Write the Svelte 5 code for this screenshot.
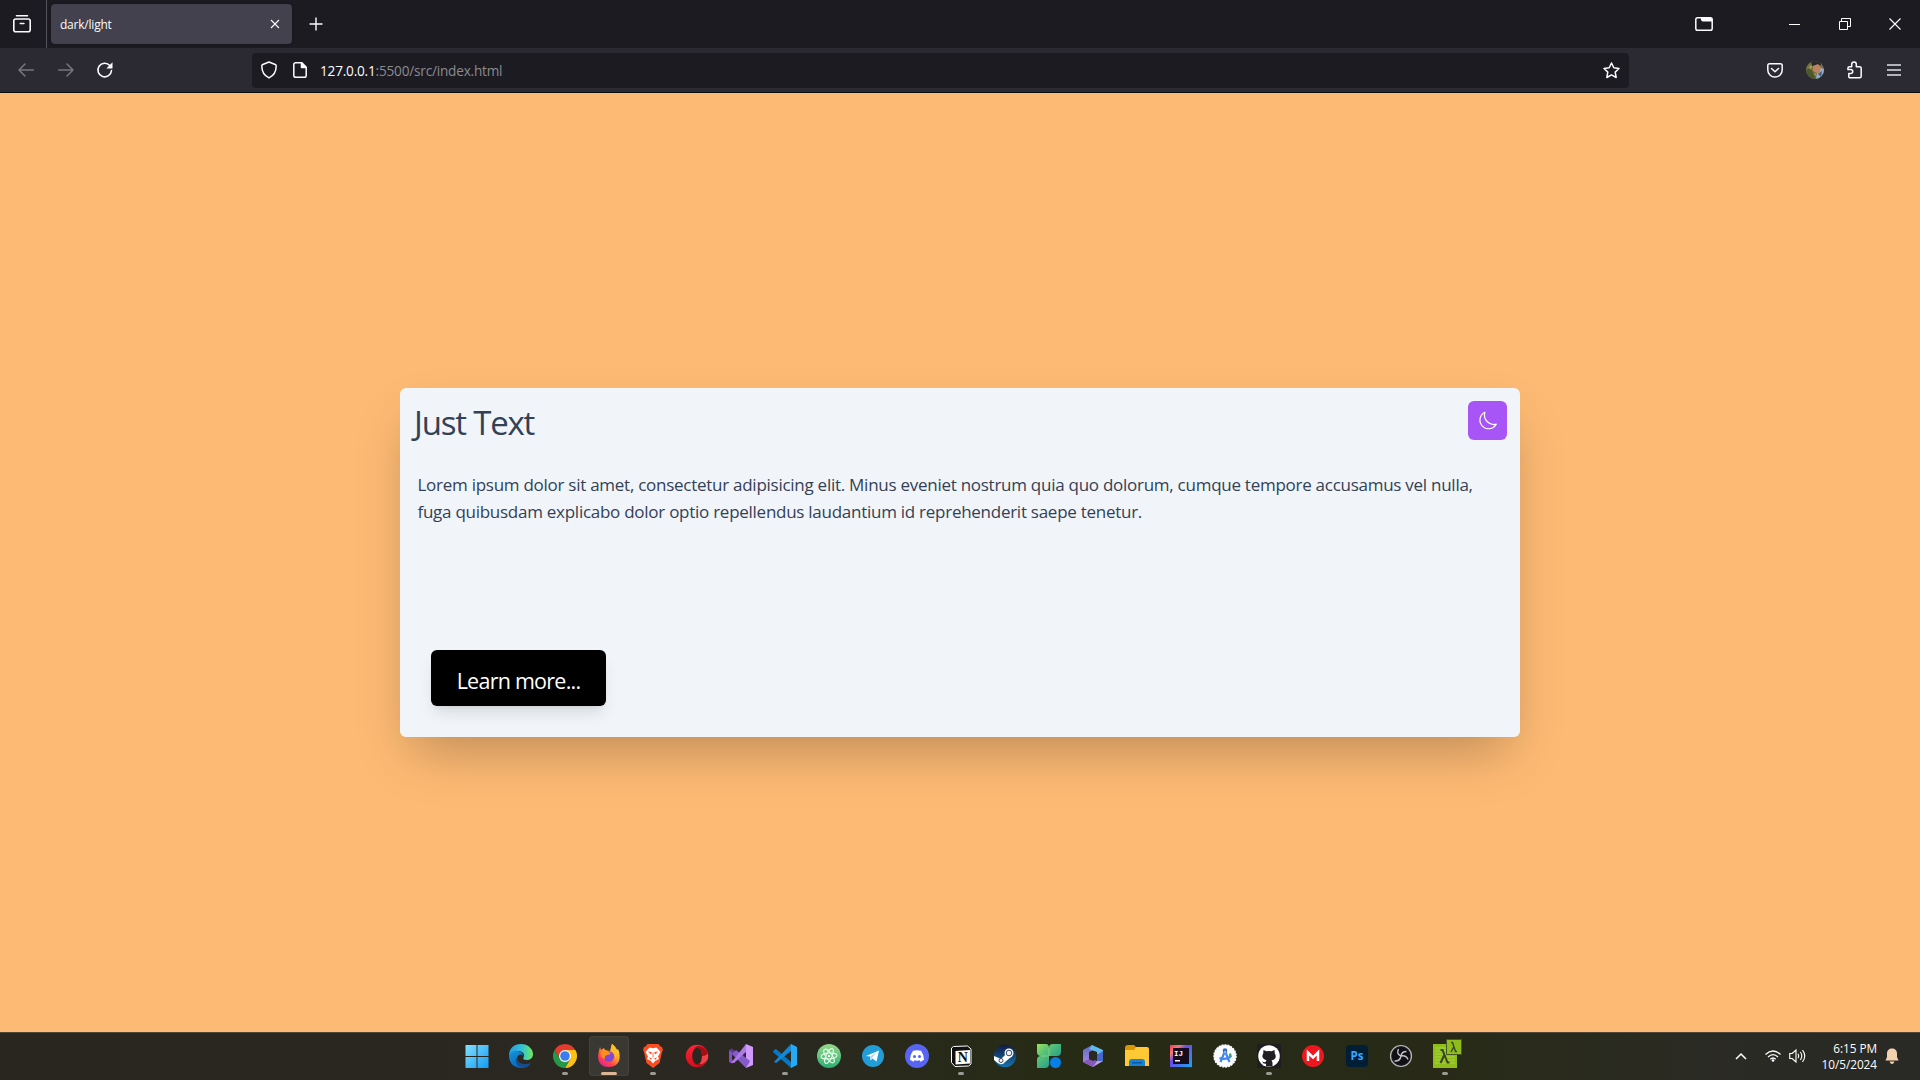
<script>
  const apps = [
    { name: 'windows' }, { name: 'edge' }, { name: 'chrome', open: true },
    { name: 'firefox', open: true, active: true }, { name: 'brave', open: true },
    { name: 'opera' }, { name: 'vstudio' }, { name: 'vscode', open: true },
    { name: 'atom' }, { name: 'telegram' }, { name: 'discord' },
    { name: 'notion', open: true }, { name: 'steam' }, { name: 'clover' },
    { name: 'office' }, { name: 'files' }, { name: 'idea' }, { name: 'android' },
    { name: 'github', open: true }, { name: 'mega' }, { name: 'ps' },
    { name: 'obs' }, { name: 'lambda', open: true }
  ];
</script>

<div class="screen">
  <div class="tabbar">
    <div class="recent">
      <svg width="20" height="20" viewBox="0 0 20 20" fill="none" stroke="#fbfbfe" stroke-width="1.6" stroke-linecap="round"><path d="M4.500 1.800h11" /><rect x="1.800" y="5" width="16.400" height="12.800" rx="2" /><path d="M8.300 9.500h3.600" /></svg>
    </div>
    <div class="tab">
      <span class="tab-title">dark/light</span>
      <svg width="10" height="10" viewBox="0 0 10 10" stroke="#fbfbfe" stroke-width="1.1"><path d="M1 1l8 8M9 1L1 9" /></svg>
    </div>
    <svg class="plus" width="14" height="14" viewBox="0 0 14 14" stroke="#fbfbfe" stroke-width="1.4"><path d="M7 .5v13M.5 7h13" /></svg>
    <div class="window-buttons">
      <svg width="18" height="14" viewBox="0 0 18 14" fill="none" stroke="#fbfbfe" stroke-width="1.5"><rect x=".8" y=".8" width="16.4" height="12.4" rx="1.8" /><path d="M6 1h11v3.4H8q-2 0-2-2z" fill="#fbfbfe" stroke="none" /></svg>
      <svg class="min" width="11" height="11" viewBox="0 0 11 11" stroke="#fff"><path d="M0 5.5h11" /></svg>
      <svg class="restore" width="12" height="12" viewBox="0 0 12 12" fill="none" stroke="#fff"><path d="M.5 3.5h8v8h-8zM2.5 3.5v-3h9v8h-3" /></svg>
      <svg class="close" width="12" height="12" viewBox="0 0 12 12" stroke="#fff" stroke-width="1.1"><path d="M.5.5l11 11M11.5.5l-11 11" /></svg>
    </div>
  </div>

  <div class="toolbar">
    <div class="nav">
      <svg width="16" height="14" viewBox="0 0 16 14" fill="none" stroke="#77767e" stroke-width="1.5" stroke-linecap="round" stroke-linejoin="round"><path d="M15.3 7H1M7 1L1 7l6 6" /></svg>
      <svg width="16" height="14" viewBox="0 0 16 14" fill="none" stroke="#77767e" stroke-width="1.5" stroke-linecap="round" stroke-linejoin="round"><path d="M.7 7H15M9 1l6 6-6 6" /></svg>
      <svg width="16" height="16" viewBox="0 0 16 16" fill="none" stroke="#fbfbfe" stroke-width="1.6" stroke-linecap="round"><path d="M14.5 8.5A6.8 6.8 0 1 1 12.8 3.5" /><path d="M15.5.2V6.5H9.3z" fill="#fbfbfe" stroke="none" /></svg>
    </div>
    <div class="url">
      <svg width="16" height="18" viewBox="0 0 16 18" fill="none" stroke="#fbfbfe" stroke-width="1.5" stroke-linejoin="round"><path d="M8 1l6.2 2.5q1 .4 1 1.5c0 5-2 9.4-7.2 11.900C2.800 14.400.8 10 .8 5q0-1.100 1-1.500z" /></svg>
      <svg class="page" width="14" height="16" viewBox="0 0 14 16" fill="none" stroke="#fbfbfe" stroke-width="1.5" stroke-linejoin="round"><path d="M2.800.8h6L13.200 5.200v8.200q0 1.800-1.800 1.800H2.800q-2 0-2-1.800V2.600Q.8.800 2.800.8z" /><path d="M8.500.8v4.700h4.700z" fill="#fbfbfe" /></svg>
      <span class="address"><b>127.0.0.1</b>:5500/src/index.html</span>
      <svg class="star" width="17" height="17" viewBox="0 0 17 17" fill="none" stroke="#fbfbfe" stroke-width="1.5" stroke-linejoin="round"><path d="M8.500 1l2.300 4.800 5.200.7-3.800 3.600 1 5.400-4.700-2.600-4.700 2.600 1-5.400L1 6.500l5.200-.7z" /></svg>
    </div>
    <div class="actions">
      <svg width="16" height="15" viewBox="0 0 16 15" fill="none" stroke="#fbfbfe" stroke-width="1.500" stroke-linecap="round" stroke-linejoin="round"><path d="M2.600.8h10.800q1.800 0 1.800 1.800v4.300a7.200 7.200 0 0 1-14.400 0V2.600Q.8.800 2.600.8zM4.500 5.500L8 8.800l3.500-3.300" /></svg>
      <svg class="avatar" width="18" height="18" viewBox="0 0 18 18"><defs><clipPath id="av"><circle cx="9" cy="9" r="9" /></clipPath></defs><g clip-path="url(#av)"><path fill="#747345" d="M0 0h18v18H0z" /><path fill="#8eaec9" d="M12 6l6 2v10h-8z" /><path fill="#282a24" d="M5 0h9l1 4-9 1z" /><path fill="#c28165" d="M7 5l5-2 3 4-2 6-6-3z" /><path fill="#4b572e" d="M0 9l5-2 2 5 3 2-1 4H0z" /><path fill="#b5a157" d="M3 6l3-2-1 5zM8 12l2 1-1 3z" /><path fill="#475d80" d="M12 13l4-3-1 6z" /></g></svg>
      <svg width="15" height="18" viewBox="0 0 15 18" fill="none" stroke="#fbfbfe" stroke-width="1.500" stroke-linejoin="round"><path d="M4.700 5.700V3.300a2.300 2.300 0 0 1 4.600 0v2.400h3.400q1.500 0 1.500 1.500v8.100q0 1.500-1.500 1.500H3.200q-1.400 0-1.400-1.400v-2.900h1.900a2 2 0 0 0 0-4H.9V7.200q0-1.500 1.500-1.500z" /></svg>
      <svg class="menu" width="14" height="12" viewBox="0 0 14 12" stroke="#e0e0e6" stroke-width="1.400"><path d="M0 1h14M0 6h14M0 11h14" /></svg>
    </div>
  </div>

  <main>
    <section class="card">
      <header>
        <h1>Just Text</h1>
        <button class="theme" aria-label="Toggle theme"><svg width="20" height="20" viewBox="0 0 20 20" fill="none" stroke="#fff" stroke-width="1.200" stroke-linejoin="round"><path d="M6.900 1.200A8.700 8.700 0 1 0 18.300 13.200 9.500 9.500 0 0 1 6.900 1.200z" /></svg></button>
      </header>
      <p><span class="line">Lorem ipsum dolor sit amet, consectetur adipisicing elit. Minus eveniet nostrum quia quo dolorum, cumque tempore accusamus vel nulla,</span> <span class="line">fuga quibusdam explicabo dolor optio repellendus laudantium id reprehenderit saepe tenetur.</span></p>
      <button class="more">Learn more...</button>
    </section>
  </main>

  <footer>
    <div class="apps">
      {#each apps as app}
        <div class="app" class:active={app.active}>
          <svg width="24" height="24" viewBox="0 0 24 24">
            {#if app.name === 'windows'}
              <defs><linearGradient id="win" x2="1" y2="1"><stop stop-color="#82e0fc" /><stop offset="1" stop-color="#139af5" /></linearGradient></defs>
              <path fill="url(#win)" d="M.5 1h11v11h-11zM12.500 1h11v11h-11zM.5 13h11v11h-11zM12.500 13h11v11h-11z" />
            {:else if app.name === 'edge'}
              <defs><linearGradient id="e1" x2="1"><stop stop-color="#249be5" /><stop offset=".55" stop-color="#35c1d3" /><stop offset="1" stop-color="#70ec59" /></linearGradient><linearGradient id="e2" x2=".5" y2="1"><stop stop-color="#1794d7" /><stop offset="1" stop-color="#0864bd" /></linearGradient></defs>
              <path fill="url(#e1)" d="M0 12C0 4 5 0 12 0c7 0 12 5 12 10 0 4-3 6-6.500 6-3 0-4-1-3-2.500C17 9 11 6 6 7.500Q2 8.700 0 12z" />
              <path fill="url(#e2)" d="M0 12c1-4 5-6 9-5 3 .6 5 2.500 5 5-2-3-6-1-6 3 0 5 6 8 13 5-2 3-5 4-9 4C5 24 0 19 0 12z" />
              <path fill="#134d8d" d="M9 12.500c-2 6 5 9.500 13 6.500-3 5-9 6-13 2.500-3-3-3-7 0-9z" />
            {:else if app.name === 'chrome'}
              <path fill="#e33b2e" d="M1.600 6A12 12 0 0 1 22.400 6H12L7 15z" />
              <path fill="#fbc116" d="M22.400 6A12 12 0 0 1 12 24l5.200-9L12 6z" />
              <path fill="#279847" d="M1.600 6A12 12 0 0 0 12 24l5.200-9L12 17 7 15z" />
              <circle cx="12" cy="12" r="6" fill="#fff" /><circle cx="12" cy="12" r="4.800" fill="#3b7ded" />
            {:else if app.name === 'firefox'}
              <defs><linearGradient id="ff" x1=".9" x2=".2" y2="1"><stop stop-color="#fff044" /><stop offset=".45" stop-color="#ff9a24" /><stop offset=".7" stop-color="#ff4a45" /><stop offset="1" stop-color="#e6189b" /></linearGradient></defs>
              <path fill="url(#ff)" d="M3 3l1 3 3-2 1 2 5 1 2-7c3 2 4 4 5 6l1-1c4 9 1 18-9 18C3 23 0 17 1.500 9z" />
              <circle cx="12" cy="12.500" r="5.200" fill="#8248d3" /><path fill="#ff8e1d" d="M4 8q4-2 7 0l3 1q-1 2-4 2-3 1-2 4c-4-1-5-4-4-7z" /><path fill="#ffbb28" d="M15 0c-3 6 4 8 3 14 4-5 2-10-3-14z" />
            {:else if app.name === 'brave'}
              <path fill="#fb4d22" d="M6.500 0h11l2 2.500 1.500.5 1 3-1 2-2.500 11L12 24l-6.500-5L3 8 2 6l1-3 1.500-.5z" />
              <path fill="#fff" d="M8.500 3.500l3.500.8 3.500-.8 4 4.500-2.500 4.500 1 2.500-4 2-2 2.500-2-2.500-4-2 1-2.500L4.500 8z" /><path fill="#fb4d22" d="M6.800 7.500l4 .8-.8 2.200zM17.200 7.500l-4 .8.8 2.200zM8 13.500l3 1-1.500 1.200zM16 13.500l-3 1 1.500 1.200zM11.600 8.500h.8v5h-.8z" />
            {:else if app.name === 'opera'}
              <defs><linearGradient id="op" x2="0" y2="1"><stop stop-color="#ff2337" /><stop offset="1" stop-color="#d1101d" /></linearGradient></defs>
              <path fill="url(#op)" fill-rule="evenodd" d="M12 .8a11.200 11.200 0 1 0 0 22.400 11.200 11.200 0 0 0 0-22.400zM12.500 3.500c3 0 4.500 4 4.500 8.500s-1.500 8.500-4.500 8.500S7.300 16.500 7.300 12s2.200-8.500 5.200-8.500z" /><path fill="#a70d14" d="M8.500 5.500Q12 .8 16 2.600c5 2 7.200 5.500 7.200 9.400s-2.200 7.400-7.200 9.400q-4 1.800-7.500-2.900c4 3.500 8.500 1 8.500-6.500s-4.500-10-8.500-6.500z" /><path fill="#f0424b" d="M17 12q0 6-3 8.300 5 .7 8.800-5.300.8-3 0-6-1 3-5.800 3z" />
            {:else if app.name === 'vstudio'}
              <path fill="#5c3c98" d="M0 6l3-1.500L19 18l-1 5L0 8z" /><path fill="#8751bd" d="M0 7v11l3 1.500 2-2-2-2V8z" /><path fill="#d09aff" d="M17 0l7 3v18l-7 3z" /><path fill="#855bc9" d="M7 6l14 11-4 7L3 10z" />
              <path fill="#ae78e7" d="M2 19L17 0v8L5 19z" />
            {:else if app.name === 'vscode'}
              <path fill="#0878c6" d="M1 6l2-1 15 13v6L0 8z" /><path fill="#1289d8" d="M1 18L18 0v7L3 19z" /><path fill="#28a9f4" d="M18 0l6 3v18l-6 3z" />
            {:else if app.name === 'atom'}
              <defs><linearGradient id="at" x2="0" y2="1"><stop stop-color="#97d98a" /><stop offset="1" stop-color="#2baf74" /></linearGradient></defs>
              <circle cx="12" cy="12" r="12" fill="url(#at)" /><g fill="none" stroke="#e9ffe9" stroke-width="1"><ellipse cx="12" cy="12" rx="3" ry="8" transform="rotate(25 12 12)" /><ellipse cx="12" cy="12" rx="3" ry="8" transform="rotate(85 12 12)" /><ellipse cx="12" cy="12" rx="3" ry="8" transform="rotate(145 12 12)" /></g><circle cx="12" cy="12" r="1.200" fill="#fff" />
            {:else if app.name === 'telegram'}
              <circle cx="12" cy="12" r="11" fill="#229dd8" /><path fill="#fff" d="M5 12L18 6.500l-2.500 11-4-3-2 2-.5-4z" /><path fill="#b6d9eb" d="M9 12.500l7-4.500-5 6-1.500 2z" />
            {:else if app.name === 'discord'}
              <circle cx="12" cy="12" r="12" fill="#5865f2" /><path fill="#fff" d="M8 6.800q4-1 8 0 3 4 3 9l-3.500 2-1-1.500q-2.500.8-5 0l-1 1.500-3.500-2q0-5 3-9z" /><circle cx="9.500" cy="12.500" r="1.500" fill="#5865f2" /><circle cx="14.500" cy="12.500" r="1.500" fill="#5865f2" />
            {:else if app.name === 'notion'}
              <path fill="#111" stroke="#fff" stroke-width="1" d="M2.500 4l2-1.500L18.500 2l3.500 3v15L19.500 22 6 22.500l-3.500-4z" /><path fill="#fff" d="M6.500 7L21 6v13.500L6.500 20.500z" /><text x="13.700" y="18" text-anchor="middle" font-family="Liberation Serif, serif" font-weight="700" font-size="14" fill="#111">N</text>
            {:else if app.name === 'steam'}
              <defs><linearGradient id="st" x2="0" y2="1"><stop stop-color="#111b42" /><stop offset="1" stop-color="#1474ad" /></linearGradient></defs>
              <circle cx="12" cy="12" r="11.200" fill="url(#st)" /><path fill="#fff" d="M1 12l7 3 5-5 5 3-6 5q-2 3-5 2-3-1-6-4z" /><circle cx="16" cy="9" r="4.500" fill="#fff" /><circle cx="16" cy="9" r="2.800" fill="#f2f2f2" stroke="#34476e" /><circle cx="8" cy="16.500" r="2" fill="none" stroke="#34476e" />
            {:else if app.name === 'clover'}
              <defs><linearGradient id="cl" gradientUnits="userSpaceOnUse" x2="20" y2="20"><stop stop-color="#9de35e" /><stop offset=".35" stop-color="#5cc577" /><stop offset="1" stop-color="#20988c" /></linearGradient></defs>
              <path fill="url(#cl)" d="M0 0h9q3 0 3 4 0-4 4-4h8v8q0 4-4 4h-8v8q0 4-4 4H0v-8q0-4 4-4Q0 12 0 8z" /><path d="M12 4v8H4" fill="none" stroke="#a7df84" stroke-width=".6" /><circle cx="18.500" cy="18.500" r="5.500" fill="#087fe4" />
            {:else if app.name === 'office'}
              <defs><linearGradient id="of" x2="0" y2="1"><stop stop-color="#596abd" /><stop offset="1" stop-color="#a582e5" /></linearGradient></defs>
              <path fill="url(#of)" d="M11 1L2 6v12l6-2V8l7-3z" /><path fill="#60b9ee" d="M11 1l11 5v7l-6-3V8L8 5z" /><path fill="#4768ca" d="M22 7v10l-6 2v-8z" /><path fill="#baa1ef" d="M16 17l6 0-10 6-10-5 8-2z" /><path fill="#8758b8" d="M2 18l6-3 8 2-4 6z" /><path fill="#292821" d="M12 8l4 2v5l-4 2-4-2v-5z" />
            {:else if app.name === 'files'}
              <path fill="#d89506" d="M0 4q0-3 3-3h6l3 3v5H0z" /><path fill="#ffc834" d="M0 6h9l2-3h11q2 0 2 2v17H0z" /><path fill="#1683d4" d="M4 22v-4q0-3 3-3h10q3 0 3 3v4z" /><path fill="#0755a0" d="M7 18h10v1.500H7z" />
            {:else if app.name === 'idea'}
              <defs><linearGradient id="id" x2="1" y2="1"><stop stop-color="#f43164" /><stop offset=".22" stop-color="#f67b71" /><stop offset=".4" stop-color="#694bea" /><stop offset="1" stop-color="#15a9ee" /></linearGradient></defs>
              <path fill="url(#id)" d="M1 1h22v22H1z" /><path fill="#160b1c" d="M4 4h16v16H4z" /><text x="5" y="11.500" font-family="Liberation Mono, monospace" font-size="7.500" font-weight="700" fill="#fff">IJ</text><path fill="#fff" d="M6 16h5v1.500H6z" />
            {:else if app.name === 'android'}
              <circle cx="12" cy="12" r="11" fill="#f9fbfd" stroke="#fff" stroke-width="1.500" stroke-dasharray="2 1" /><path fill="#38a66a" d="M16 10l2-1 1 4-3 1z" /><path fill="none" stroke="#4386ef" stroke-width="2.200" d="M12 7L7.500 18M12 7l4.500 11M6.500 14q5.500 2 11-1" /><circle cx="12" cy="6.500" r="2.300" fill="#3870c6" /><circle cx="12" cy="8" r=".8" fill="#fff" />
            {:else if app.name === 'github'}
              <path fill="#201c21" d="M0 0h24v24H0z" /><circle cx="12" cy="12" r="10.800" fill="#fff" /><path fill="#211e23" d="M6.500 6l3 1.300q2.500-.6 5 0l3-1.300.3 3.500q3 5-3.300 7l1 2v4H9v-2.800q-3 .5-4-2.500 3 2 4 0l.5-1q-6-2-3.300-6.700z" />
            {:else if app.name === 'mega'}
              <circle cx="12" cy="12" r="11" fill="#ed171f" /><path fill="none" stroke="#fff" stroke-width="2.500" d="M7 17V8.500l5 5 5-5V17" />
            {:else if app.name === 'ps'}
              <rect x="1" y="1" width="22" height="22" rx="4" fill="#001e36" /><text x="12" y="15.800" text-anchor="middle" font-family="Open Sans, sans-serif" font-weight="700" font-size="11.500" fill="#35a8ff">Ps</text>
            {:else if app.name === 'obs'}
              <circle cx="12" cy="12" r="10.500" fill="#242326" stroke="#bbb9bd" stroke-width="1.200" /><circle cx="12" cy="12" r="9" fill="#111014" /><path fill="none" stroke="#c5c2c8" stroke-width="1.400" d="M9.500 5q-2.500 5 2.500 7 5-1 7 3.500M12 12q-1 5.500-6.500 5M12 12q.5-4.500 5.500-4.500" />
            {:else if app.name === 'lambda'}
              <path fill="#8fbe1b" d="M0 0h24v24H0z" /><path stroke="#b0dc44" stroke-width=".8" d="M2 4h20M2 7h20M2 10h20M2 13h20M2 16h20M2 19h20" /><path fill="none" stroke="#39432b" stroke-width="2" d="M7.500 6h2l5 12.500h2M11.500 10.500L7.500 19" />
            {/if}
          </svg>
          {#if app.name === 'lambda'}
            <svg class="badge" width="16" height="16" viewBox="0 0 16 16"><path fill="#8fbe1b" stroke="#46562c" d="M.5.5h15v15H.5z" /><path fill="none" stroke="#39432b" stroke-width="1.400" d="M5 3.500h1.500l3 9H11M8 7.500L5 13" /></svg>
          {/if}
          {#if app.open}<i class="mark"></i>{/if}
        </div>
      {/each}
    </div>
    <div class="tray">
      <svg width="12" height="8" viewBox="0 0 12 8" fill="none" stroke="#fff" stroke-width="1.500"><path d="M1 7l5-5 5 5" /></svg>
      <svg class="wifi" width="16" height="12" viewBox="0 0 16 12" fill="none" stroke="#fff" stroke-width="1.200"><path d="M.5 4.500q7.500-7 15 0M3 7q5-4.800 10 0M5.300 9.300q2.700-2.600 5.400 0" /><circle cx="8" cy="10.500" r="1.300" fill="#fff" stroke="none" /></svg>
      <svg class="sound" width="17" height="14" viewBox="0 0 17 14" fill="none" stroke="#fff" stroke-width="1.100"><path d="M.7 4.500h2.500L7 1v12L3.200 9.500H.7zM9 4.800q1.500 2.200 0 4.400M11.300 3q3 4 0 8M13.500 1.200q4.500 5.800 0 11.600" /></svg>
      <div class="clock"><span>6:15 PM</span><span>10/5/2024</span></div>
      <svg class="bell" width="14" height="16" viewBox="0 0 14 16" fill="#f3d1ae"><path d="M7 .5c3 0 5 2 5 5V9l1.500 3.500H.5L2 9V5.500c0-3 2-5 5-5zM4.500 13.500h5Q8.500 16 7 16t-2.500-2.500z" /></svg>
    </div>
  </footer>
</div>

<style>
  :global(body) { margin: 0; overflow: hidden; }
  .screen { width: 1920px; height: 1080px; display: flex; flex-direction: column; font-family: "Open Sans", "Noto Sans", sans-serif; background: #fdba74; }
  svg { display: block; flex: none; overflow: visible; }
  button { border: 0; padding: 0; font-family: inherit; }
  .tabbar { height: 48px; background: #1c1b22; display: flex; align-items: center; }
  .recent { width: 47px; height: 48px; box-sizing: border-box; padding-left: 12px; border-right: 1px solid #55545c; display: flex; align-items: center; }
  .tab { width: 241px; height: 40px; box-sizing: border-box; margin-left: 4px; padding: 0 12px 0 9px; background: #42414d; border-radius: 4px; box-shadow: 0 0 3px #0006; display: flex; align-items: center; justify-content: space-between; }
  .tab-title { font-size: 12px; color: #fbfbfe; letter-spacing: -0.22px; }
  .plus { margin-left: 17px; }
  .window-buttons { margin-left: auto; padding-right: 19px; display: flex; align-items: center; }
  .min { margin-left: 76px; }
  .restore { margin-left: 39px; }
  .close { margin-left: 38px; }
  .toolbar { height: 45px; box-sizing: border-box; background: #2b2a33; border-bottom: 1px solid #0c0c0d; display: flex; align-items: center; }
  .nav { width: 252px; box-sizing: border-box; padding-left: 18px; display: flex; align-items: center; gap: 23.5px; }
  .url { width: 1377px; height: 35px; box-sizing: border-box; padding: 0 9px; border-radius: 4px; background: #1c1b22; display: flex; align-items: center; }
  .page { margin-left: 16px; }
  .address { margin-left: 13px; font-size: 13.6px; color: #8b8a90; letter-spacing: -0.2px; padding-top: 1px; }
  .address b { font-weight: 400; color: #fbfbfe; }
  .star { margin-left: auto; }
  .actions { margin-left: auto; padding-right: 19px; display: flex; align-items: center; gap: 24px; }
  .avatar { margin: 0 -1px; }
  .menu { margin-left: 1px; }
  main { height: 939px; display: flex; align-items: center; justify-content: center; }
  .card { width: 1120px; height: 349px; box-sizing: border-box; border-radius: 6px; background: #f1f5f9; color: #334155; box-shadow: 0 25px 50px -12px #00000040; padding: 13px; }
  header { display: flex; justify-content: space-between; height: 39px; }
  h1 { margin: 0; padding-left: 1px; font-weight: 400; font-size: 33px; line-height: 44px; letter-spacing: -1.2px; }
  .theme { width: 39px; height: 39px; border-radius: 6px; background: #a855f7; display: flex; align-items: center; justify-content: center; }
  p { margin: 31px 0 0 4.5px; font-size: 17px; line-height: 27px; }
  .line { display: block; white-space: nowrap; letter-spacing: -0.265px; }
  .more { display: block; width: 175px; height: 56px; margin: 125px 0 0 18px; padding-top: 4px; border-radius: 6px; background: #000; color: #fff; font-size: 21.5px; letter-spacing: -0.75px; box-shadow: 0 10px 15px -3px #0000001a, 0 4px 6px -4px #0000001a; }
  footer { height: 48px; box-sizing: border-box; padding-bottom: 1px; border-top: 1px solid #4d4639; background: linear-gradient(90deg, #28261f 0%, #2a2820 40%, #262b15 55%, #282a17 75%, #2b2b25 90%, #292925); display: flex; align-items: center; }
  .apps { display: flex; margin-left: 455px; }
  .app { width: 40px; height: 40px; margin: 0 2px; border-radius: 4px; display: flex; align-items: center; justify-content: center; position: relative; }
  .active { background: #3a3832; box-shadow: inset 0 0 0 1px #44423b; }
  .mark { position: absolute; bottom: 1px; left: 17px; width: 6px; height: 3px; border-radius: 2px; background: #9b9a94; }
  .active .mark { left: 12px; width: 16px; background: #ddb595; }
  .badge { position: absolute; left: 21px; top: 3px; }
  .tray { margin-left: auto; padding-right: 21px; display: flex; align-items: center; }
  .wifi { margin-left: 18px; }
  .sound { margin-left: 8px; }
  .clock { width: 71px; display: flex; flex-direction: column; text-align: right; color: #fff; font-size: 11.8px; line-height: 16px; letter-spacing: -0.05px; }
  .bell { margin-left: 8px; }
</style>
